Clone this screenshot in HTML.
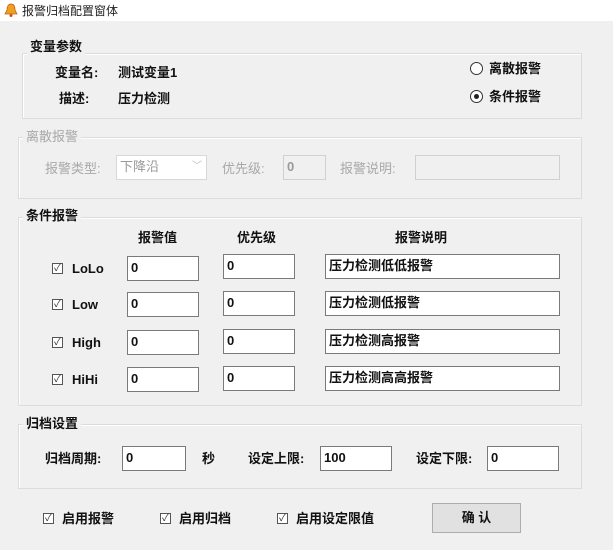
<!DOCTYPE html>
<html><head><meta charset="utf-8"><style>
body{margin:0;width:613px;height:550px;background:#f0f0f0;position:relative;overflow:hidden;font-family:"Liberation Sans","Noto Sans CJK SC",sans-serif;font-size:13px;color:#111;font-weight:bold}
.a{position:absolute;white-space:nowrap;line-height:16px}
.g{position:absolute;border:1px solid #dcdcdc;box-shadow:1px 1px 0 #fff inset}
.t{position:absolute;background:#f0f0f0;padding:0 3px;line-height:16px}
.in{position:absolute;background:#fff;border:1px solid #7a7a7a;box-sizing:border-box;padding-left:3px;line-height:22px;font-size:13px}
.cb{position:absolute;width:11px;height:11px;border:1px solid #555;background:#fff;box-sizing:border-box;font-size:10px;line-height:9px;text-align:center;font-weight:normal;color:#333}
.gr{color:#a8a8a8}
</style></head><body>
<div style="position:absolute;left:0;top:0;width:613px;height:21px;background:#fff"></div>
<svg class="a" style="left:4px;top:3px" width="14" height="14" viewBox="0 0 14 14"><path d="M7 1c3 0 4 3 4 6l2 4H1l2-4c0-3 1-6 4-6z" fill="#f0a020" stroke="#c06010" stroke-width="0.8"/><circle cx="7" cy="12.5" r="1.5" fill="#d05010"/></svg>
<div class="a" style="left:22px;top:3px;font-weight:normal;font-size:12px;color:#222">报警归档配置窗体</div>

<div class="g" style="left:22px;top:53px;width:558px;height:64px"></div>
<div class="t" style="left:27px;top:39px">变量参数</div>
<div class="a" style="left:55px;top:65px">变量名:</div>
<div class="a" style="left:118px;top:65px">测试变量1</div>
<div class="a" style="left:59px;top:91px">描述:</div>
<div class="a" style="left:118px;top:91px">压力检测</div>
<div style="position:absolute;left:470px;top:62px;width:11px;height:11px;border:1px solid #333;border-radius:50%;background:#fff"></div>
<div class="a" style="left:489px;top:61px">离散报警</div>
<div style="position:absolute;left:470px;top:90px;width:11px;height:11px;border:1px solid #333;border-radius:50%;background:#fff"><div style="margin:3px;width:5px;height:5px;border-radius:50%;background:#222"></div></div>
<div class="a" style="left:489px;top:89px">条件报警</div>

<div class="g" style="left:18px;top:137px;width:562px;height:60px"></div>
<div class="t gr" style="left:23px;top:129px;font-weight:normal">离散报警</div>
<div class="a gr" style="left:45px;top:161px;font-weight:normal">报警类型:</div>
<div class="in" style="left:116px;top:155px;width:91px;height:25px;border-color:#d8d8d8;color:#999;font-weight:normal">下降沿<span style="position:absolute;right:4px;color:#bbb;font-size:10px">﹀</span></div>
<div class="a gr" style="left:222px;top:161px;font-weight:normal">优先级:</div>
<div class="in" style="left:283px;top:155px;width:43px;height:25px;border-color:#d0d0d0;background:#f0f0f0;color:#999">0</div>
<div class="a gr" style="left:340px;top:161px;font-weight:normal">报警说明:</div>
<div class="in" style="left:415px;top:155px;width:145px;height:25px;border-color:#d0d0d0;background:#f0f0f0"></div>

<div class="g" style="left:18px;top:217px;width:562px;height:187px"></div>
<div class="t" style="left:23px;top:208px">条件报警</div>
<div class="a" style="left:138px;top:230px">报警值</div>
<div class="a" style="left:237px;top:230px">优先级</div>
<div class="a" style="left:395px;top:230px">报警说明</div>

<div class="cb" style="left:52px;top:263px">✓</div><div class="a" style="left:72px;top:261px">LoLo</div>
<div class="in" style="left:127px;top:256px;width:72px;height:25px">0</div>
<div class="in" style="left:223px;top:254px;width:72px;height:25px">0</div>
<div class="in" style="left:325px;top:254px;width:235px;height:25px">压力检测低低报警</div>

<div class="cb" style="left:52px;top:299px">✓</div><div class="a" style="left:72px;top:297px">Low</div>
<div class="in" style="left:127px;top:292px;width:72px;height:25px">0</div>
<div class="in" style="left:223px;top:291px;width:72px;height:25px">0</div>
<div class="in" style="left:325px;top:291px;width:235px;height:25px">压力检测低报警</div>

<div class="cb" style="left:52px;top:337px">✓</div><div class="a" style="left:72px;top:335px">High</div>
<div class="in" style="left:127px;top:330px;width:72px;height:25px">0</div>
<div class="in" style="left:223px;top:329px;width:72px;height:25px">0</div>
<div class="in" style="left:325px;top:329px;width:235px;height:25px">压力检测高报警</div>

<div class="cb" style="left:52px;top:374px">✓</div><div class="a" style="left:72px;top:372px">HiHi</div>
<div class="in" style="left:127px;top:367px;width:72px;height:25px">0</div>
<div class="in" style="left:223px;top:366px;width:72px;height:25px">0</div>
<div class="in" style="left:325px;top:366px;width:235px;height:25px">压力检测高高报警</div>

<div class="g" style="left:18px;top:424px;width:562px;height:63px"></div>
<div class="t" style="left:23px;top:416px">归档设置</div>
<div class="a" style="left:45px;top:451px">归档周期:</div>
<div class="in" style="left:122px;top:446px;width:64px;height:25px">0</div>
<div class="a" style="left:202px;top:451px">秒</div>
<div class="a" style="left:248px;top:451px">设定上限:</div>
<div class="in" style="left:320px;top:446px;width:72px;height:25px">100</div>
<div class="a" style="left:416px;top:451px">设定下限:</div>
<div class="in" style="left:487px;top:446px;width:72px;height:25px">0</div>

<div class="cb" style="left:43px;top:513px">✓</div><div class="a" style="left:62px;top:511px">启用报警</div>
<div class="cb" style="left:160px;top:513px">✓</div><div class="a" style="left:179px;top:511px">启用归档</div>
<div class="cb" style="left:277px;top:513px">✓</div><div class="a" style="left:296px;top:511px">启用设定限值</div>
<div style="position:absolute;left:432px;top:503px;width:89px;height:30px;box-sizing:border-box;border:1px solid #adadad;background:#e1e1e1;text-align:center;line-height:28px">确&nbsp;认</div>
</body></html>
